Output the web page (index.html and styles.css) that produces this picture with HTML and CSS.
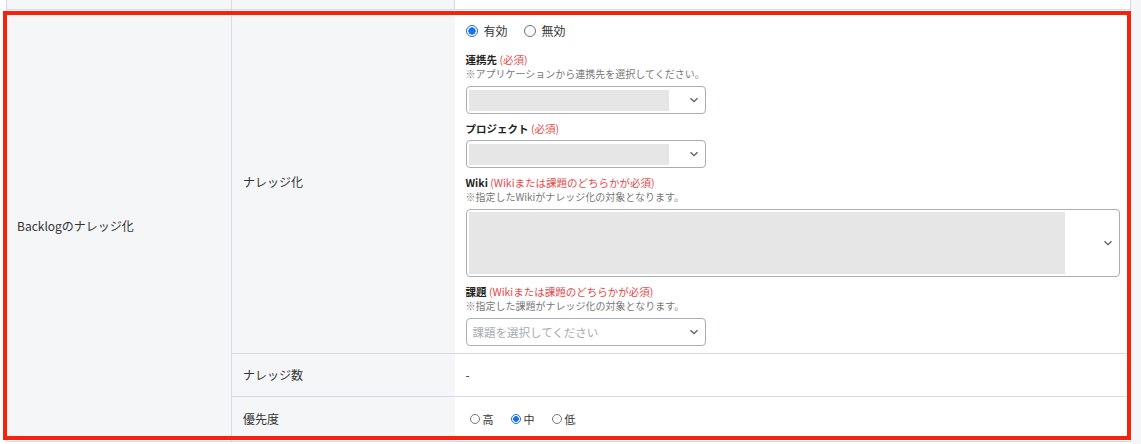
FILE: index.html
```html
<!DOCTYPE html>
<html lang="ja">
<head>
<meta charset="utf-8">
<title>Backlogのナレッジ化</title>
<link rel="stylesheet" href="styles.css">
</head>
<body>
<div class="page">
  <table class="settings">
    <colgroup>
      <col class="c1"><col class="c2"><col class="c3">
    </colgroup>
    <tr class="prev-row"><td></td><td class="sub"></td><td></td></tr>
    <tr>
      <td class="head" rowspan="3">Backlogのナレッジ化</td>
      <td class="sub">ナレッジ化</td>
      <td class="val main">
        <div class="radios">
          <label class="radio"><input type="radio" name="en" checked><span>有効</span></label>
          <label class="radio"><input type="radio" name="en"><span>無効</span></label>
        </div>
        <div class="field first">
          <div class="flabel">連携先 <span class="req">(必須)</span></div>
          <div class="hint">※アプリケーションから連携先を選択してください。</div>
          <div class="select"><span class="mask"></span><svg class="chev" viewBox="0 0 10 6"><path d="M1.5 1.2 5 4.6 8.5 1.2"/></svg></div>
        </div>
        <div class="field">
          <div class="flabel">プロジェクト <span class="req">(必須)</span></div>
          <div class="select"><span class="mask"></span><svg class="chev" viewBox="0 0 10 6"><path d="M1.5 1.2 5 4.6 8.5 1.2"/></svg></div>
        </div>
        <div class="field">
          <div class="flabel">Wiki <span class="req">(Wikiまたは課題のどちらかが必須)</span></div>
          <div class="hint">※指定したWikiがナレッジ化の対象となります。</div>
          <div class="select multi"><span class="mask"></span><svg class="chev" viewBox="0 0 10 6"><path d="M1.5 1.2 5 4.6 8.5 1.2"/></svg></div>
        </div>
        <div class="field">
          <div class="flabel">課題 <span class="req">(Wikiまたは課題のどちらかが必須)</span></div>
          <div class="hint">※指定した課題がナレッジ化の対象となります。</div>
          <div class="select small"><span class="placeholder">課題を選択してください</span><svg class="chev" viewBox="0 0 10 6"><path d="M1.5 1.2 5 4.6 8.5 1.2"/></svg></div>
        </div>
      </td>
    </tr>
    <tr class="row-count">
      <td class="sub">ナレッジ数</td>
      <td class="val">-</td>
    </tr>
    <tr class="row-prio">
      <td class="sub">優先度</td>
      <td class="val">
        <div class="radios mini">
          <label class="radio"><input type="radio" name="pr"><span>高</span></label>
          <label class="radio"><input type="radio" name="pr" checked><span>中</span></label>
          <label class="radio"><input type="radio" name="pr"><span>低</span></label>
        </div>
      </td>
    </tr>
  </table>
  <div class="highlight"></div>
</div>
</body>
</html>
```

FILE: styles.css
```css
html, body {
  margin: 0;
  padding: 0;
  background: #f5f6f8;
}
body {
  font-family: "Noto Sans CJK JP", "Noto Sans", sans-serif;
  color: #333;
  font-size: 12px;
  height: 444px;
  overflow: hidden;
}
.page {
  position: relative;
  width: 1131px;
  background: #fff;
  padding-left: 6px;
  box-sizing: border-box;
  height: 444px;
}
.settings {
  border-collapse: collapse;
  width: 1125px;
  table-layout: fixed;
  background: #fff;
}
.c1 { width: 225px; }
.c2 { width: 223px; }
.settings td {
  border: 1px solid #d6dae2;
  border-top: none;
  padding: 0 11px;
  vertical-align: middle;
  line-height: 16px;
}
.settings td.head { padding-left: 10px; }
.settings td.sub {
  background: #f5f6f8;
  border-right: none;
}
.settings td.head {
  background: #f5f6f8;
}
.settings td.val {
  border-left: none;
  background: #fff;
}
.prev-row td {
  height: 9px;
  padding: 0;
}
.prev-row td:first-child { background: #f5f6f8; }
.prev-row td.sub { background: #f5f6f8; }
.val.main {
  padding-top: 12px;
  padding-bottom: 7px;
}
.row-count td { height: 42px; }
.row-prio td { height: 44px; }

.radios {
  display: flex;
  align-items: center;
  gap: 16px;
  height: 18px;
}
.radio {
  display: flex;
  align-items: center;
  gap: 6px;
  font-size: 12px;
  line-height: 18px;
}
.radio input {
  appearance: none;
  -webkit-appearance: none;
  margin: 0;
  width: 12px;
  height: 12px;
  border: 1px solid #6f6f6f;
  border-radius: 50%;
  background: #fff;
  box-sizing: border-box;
}
.radio input:checked {
  border-color: #1a6ef0;
  background: radial-gradient(circle, #1a6ef0 0 3.4px, #fff 3.9px);
}
.radios.mini {
  gap: 17px;
  padding-left: 4px;
}
.radios.mini .radio {
  gap: 3px;
  font-size: 11px;
}
.radios.mini input {
  width: 10px;
  height: 10px;
  margin: 0;
  border-color: #777;
}
.radios.mini input:checked {
  border-color: #1a6ef0;
  background: radial-gradient(circle, #1a6ef0 0 2.6px, #fff 3.1px);
}

.field { margin-top: 8px; }
.field.first { margin-top: 13px; }
.flabel {
  font-size: 10.5px;
  font-weight: bold;
  line-height: 14px;
  color: #222;
}
.req {
  font-weight: normal;
  color: #e8494b;
}
.hint {
  font-size: 10px;
  line-height: 14px;
  color: #777;
}
.select {
  position: relative;
  margin-top: 5px;
  width: 240px;
  height: 28px;
  border: 1px solid #a9adb7;
  border-radius: 4px;
  box-sizing: border-box;
  background: #fff;
  display: flex;
  align-items: center;
  padding: 2px;
}
.field:not(.first) > .flabel + .select { margin-top: 4px; }
.mask {
  display: block;
  width: 200px;
  height: 21px;
  background: #e6e6e6;
}
.chev {
  width: 10px;
  height: 6px;
  margin-left: auto;
  margin-right: 4px;
  fill: none;
  stroke: #555a66;
  stroke-width: 1.3;
}
.select.multi {
  width: 654px;
  height: 68px;
  margin-top: 5px;
}
.select.multi .mask {
  width: 596px;
  height: 62px;
}
.select.small {
  height: 28px;
  margin-top: 5px;
  padding-left: 6px;
}
.placeholder {
  font-size: 11.5px;
  color: #a8acb4;
}
.highlight {
  position: absolute;
  left: 3px;
  top: 11px;
  width: 1128px;
  height: 429px;
  border: 4px solid #f5230c;
  box-sizing: border-box;
  pointer-events: none;
}
```
